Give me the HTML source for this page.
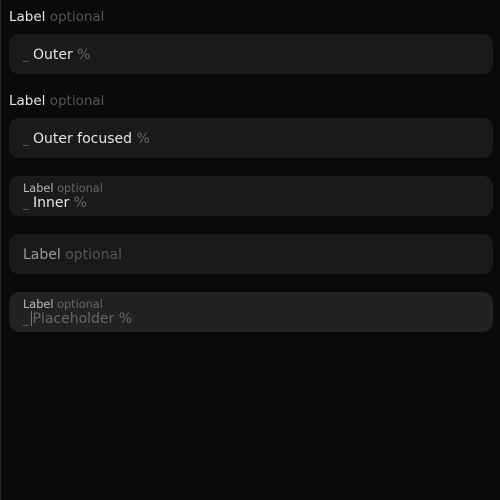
<!DOCTYPE html>
<html><head><style>
html,body{margin:0;padding:0;background:#0a0a0a;width:500px;height:500px;overflow:hidden;font-family:"DejaVu Sans","Liberation Sans",sans-serif;}
body{position:relative}
.edge{position:absolute;left:0;top:0;width:1px;height:500px;background:#262626}
.lbl{position:absolute;left:9px;font-size:13.5px;color:#e6e6e6;line-height:16px}
.opt{color:#555}
.box{position:absolute;left:9px;width:484px;height:40px;background:#1a1a1a;border-radius:10px}
.val{position:absolute;left:14px;font-size:14px;color:#e6e6e6;line-height:16px;white-space:nowrap}
.u{color:#777;font-size:11px}
.pc{color:#666}
.sl{position:absolute;left:14px;top:6px;font-size:11.3px;color:#bbb;line-height:13px}
</style></head><body>
<div class="edge"></div>
<div class="lbl" style="top:9px">Label <span class="opt">optional</span></div>
<div class="box" style="top:34px"><div class="val" style="top:13px"><span class="u">_</span> Outer <span class="pc">%</span></div></div>
<div class="lbl" style="top:93px">Label <span class="opt">optional</span></div>
<div class="box" style="top:118px"><div class="val" style="top:13px"><span class="u">_</span> Outer focused <span class="pc">%</span></div></div>
<div class="box" style="top:176px"><div class="sl">Label <span class="opt" style="color:#666">optional</span></div><div class="val" style="top:19px"><span class="u">_</span> Inner <span class="pc">%</span></div></div>
<div class="box" style="top:234px"><div class="val" style="top:13px;color:#999">Label <span class="opt">optional</span></div></div>
<div class="box" style="top:292px;background:#222"><div class="sl">Label <span class="opt" style="color:#666">optional</span></div><div class="val" style="top:19px;color:#666"><span class="u">_</span><span style="display:inline-block;width:1px;height:15px;background:#4a7fd8;vertical-align:-3px;margin:0 1px 0 2px"></span>Placeholder %</div></div>
</body></html>
